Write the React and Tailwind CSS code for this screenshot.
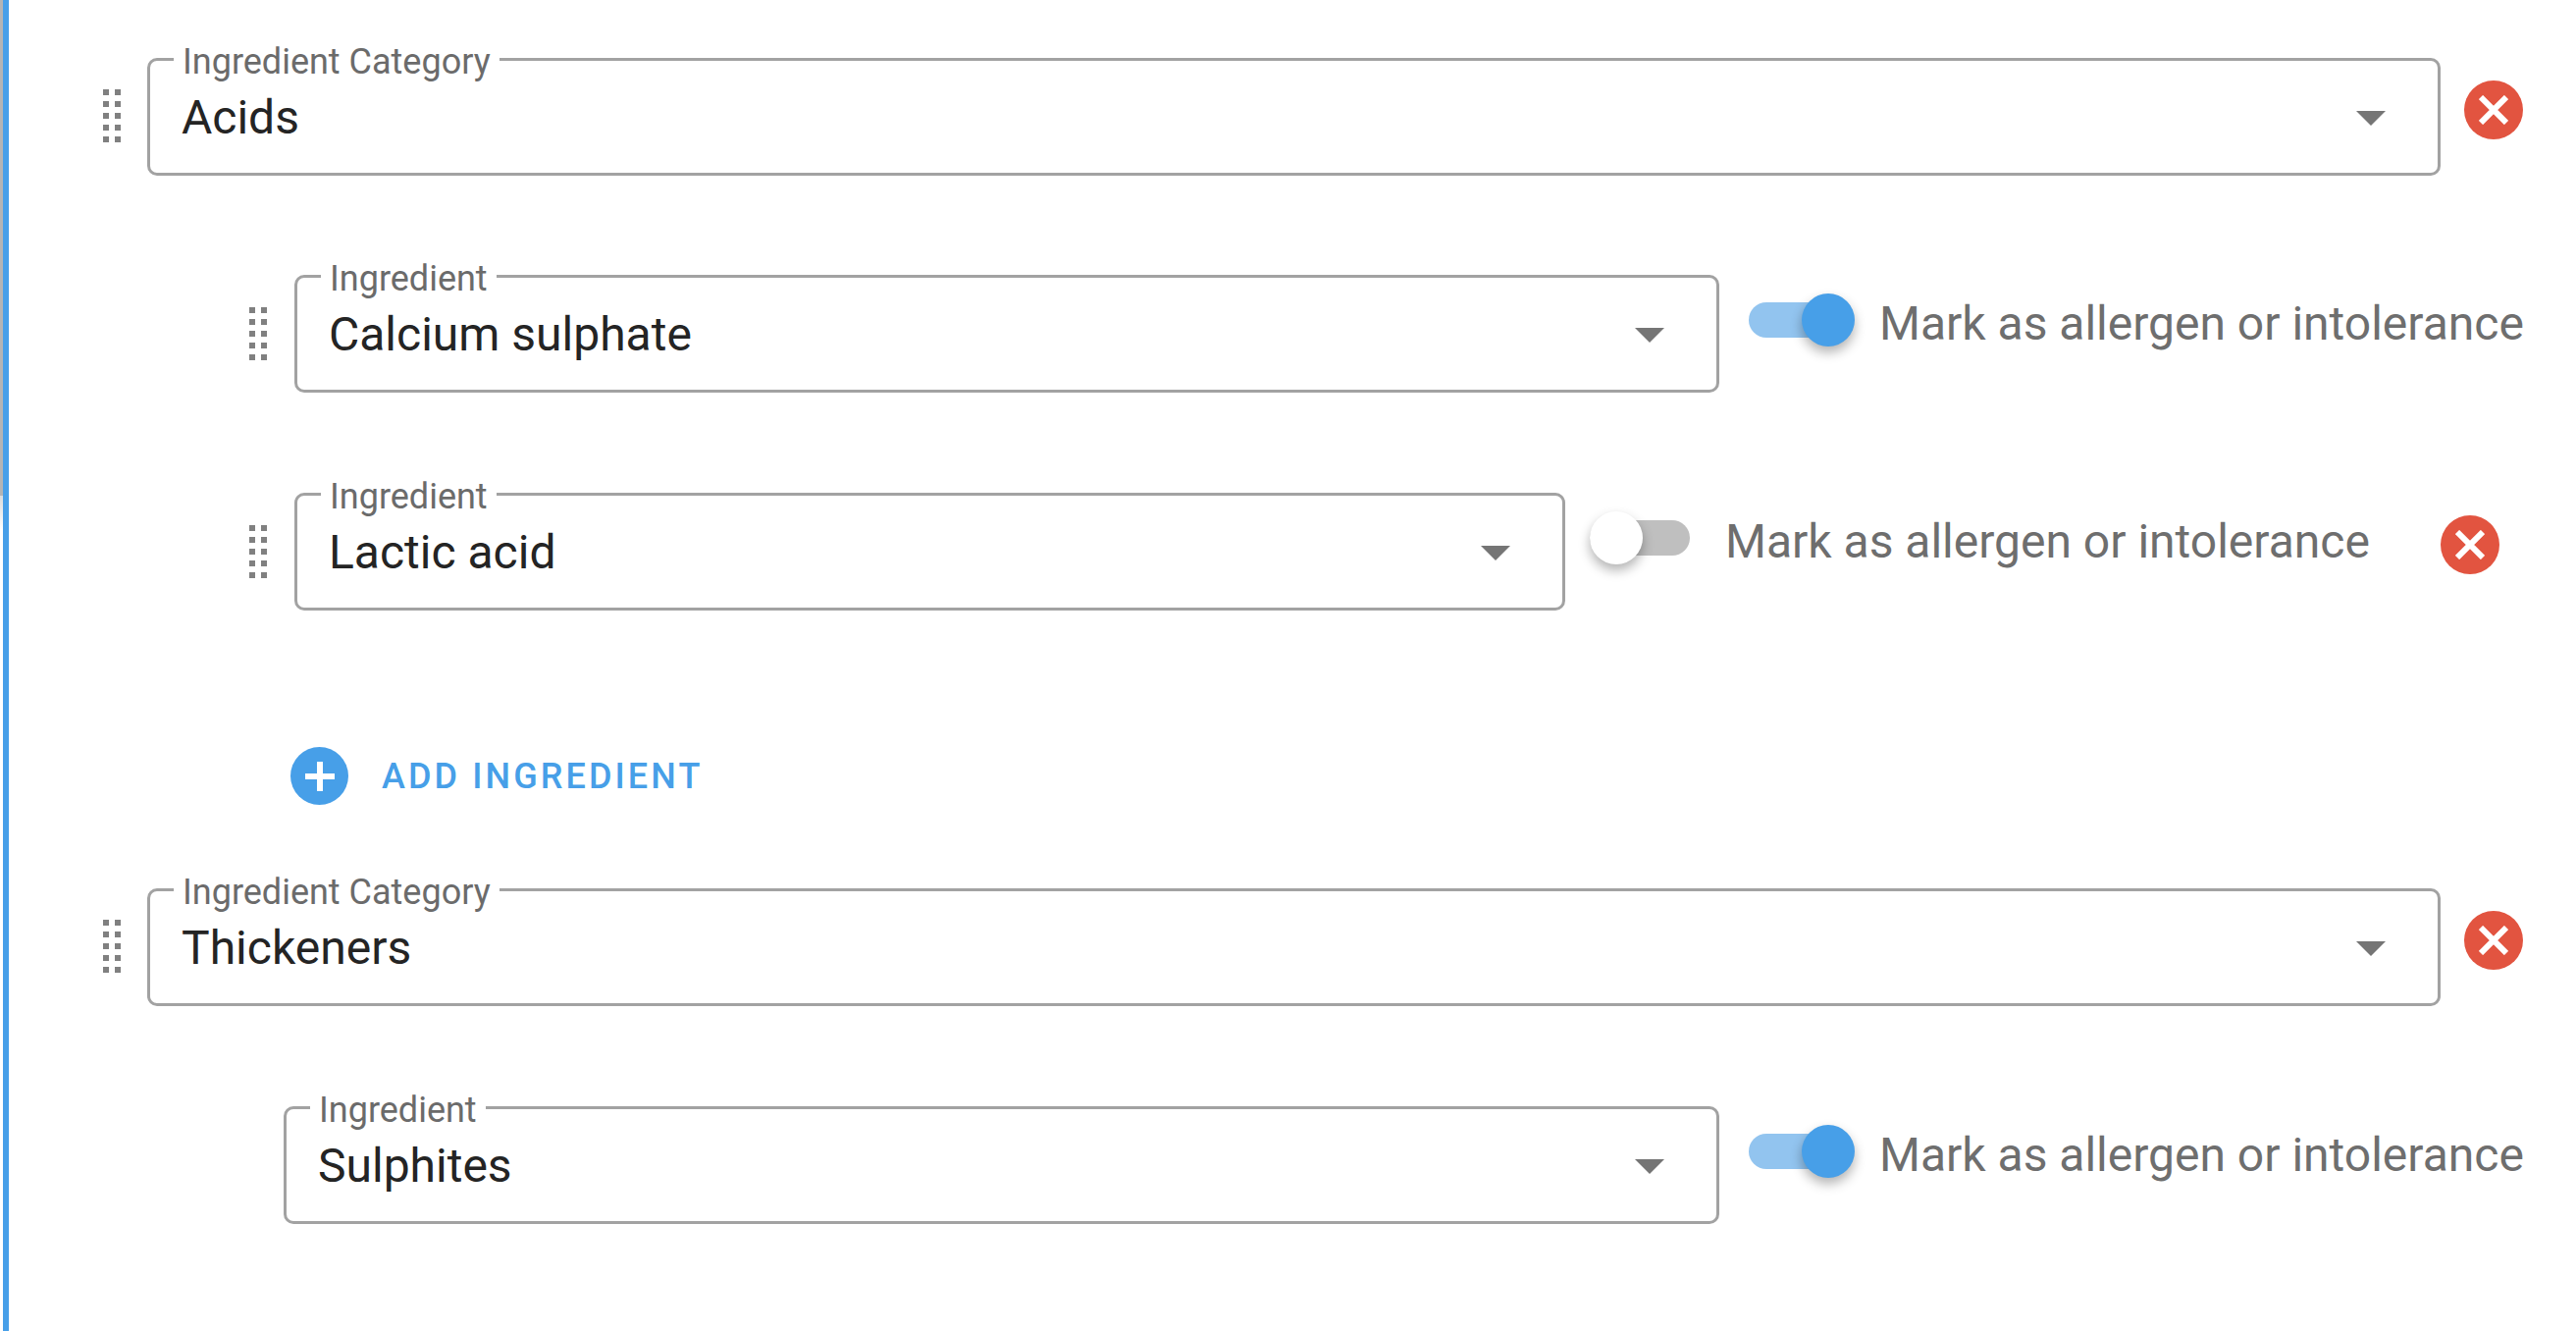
import React from 'react';

function DragHandle({ className }) {
  const rows = [0, 12, 24, 36, 48];
  return (
    <svg className={className} width="18" height="54" viewBox="0 0 18 54" fill="#808080">
      {rows.map((y) => (
        <g key={y}>
          <rect x="0" y={y} width="6" height="6" />
          <rect x="12" y={y} width="6" height="6" />
        </g>
      ))}
    </svg>
  );
}

function SelectField({ label, value, className }) {
  return (
    <fieldset className={`h-[143px] border-[3px] border-[#a2a2a2] rounded-[10px] pl-[32px] pr-[53px] flex items-center justify-between ${className}`}>
      <legend className="-ml-[8px] px-[9px] pt-[6px] text-[36px] leading-[42px] text-[#6b6b6b]">{label}</legend>
      <div className="flex items-center justify-between w-full -mt-[20px]">
        <span className="text-[48px] leading-[56px] text-[#242424]">{value}</span>
        <svg width="30" height="15" viewBox="0 0 30 15" fill="#757575">
          <path d="M0 0h30L15 15z" />
        </svg>
      </div>
    </fieldset>
  );
}

function DeleteButton({ className }) {
  return (
    <button className={`w-[60px] h-[60px] rounded-full bg-[#e25440] flex items-center justify-center shrink-0 ${className}`}>
      <svg width="30" height="30" viewBox="0 0 30 30" stroke="#ffffff" strokeWidth="6" strokeLinecap="butt">
        <path d="M2 2l26 26M28 2L2 28" />
      </svg>
    </button>
  );
}

function AllergenToggle({ checked, className }) {
  return (
    <div className={`flex items-start shrink-0 ${className}`}>
      <div className={`relative w-[102px] h-[36px] mt-[9px] rounded-full ${checked ? 'bg-[#92c4ef]' : 'bg-[#bfbfbf]'}`}>
        <span
          className={`absolute top-[-9px] w-[54px] h-[54px] rounded-full shadow-[0_6px_12px_rgba(0,0,0,0.3)] ${
            checked ? 'right-[-6px] bg-[#479fe8]' : 'left-0 bg-white'
          }`}
        />
      </div>
      <span className={`text-[48px] leading-[56px] mt-[3px] text-[#6e6e6e] ${checked ? 'ml-[31px]' : 'ml-[36px]'}`}>
        Mark as allergen or intolerance
      </span>
    </div>
  );
}

export default function App() {
  return (
    <div className="w-[2625px] h-[1356px] flex bg-white font-['Roboto',sans-serif] overflow-hidden">
      <div className="w-[3px] flex flex-col">
        <div className="h-[505px] bg-[#b4b4b4]" />
        <div className="h-[35px] bg-gradient-to-b from-[#dcdcdc] to-white" />
      </div>
      <div className="w-[6px] h-full bg-[#479fe8]" />

      <div className="flex-1 flex flex-col pt-[36px]">
        {/* Acids */}
        <div className="flex items-start">
          <DragHandle className="ml-[96px] mt-[55px]" />
          <SelectField label="Ingredient Category" value="Acids" className="ml-[27px] w-[2337px]" />
          <DeleteButton className="ml-[24px] mt-[46px]" />
        </div>

        <div className="flex items-start mt-[78px]">
          <DragHandle className="ml-[245px] mt-[56px]" />
          <SelectField label="Ingredient" value="Calcium sulphate" className="ml-[28px] w-[1452px]" />
          <AllergenToggle checked className="ml-[30px] mt-[42px]" />
        </div>

        <div className="flex items-start mt-[79px]">
          <DragHandle className="ml-[245px] mt-[56px]" />
          <SelectField label="Ingredient" value="Lactic acid" className="ml-[28px] w-[1295px]" />
          <AllergenToggle className="ml-[25px] mt-[42px]" />
          <DeleteButton className="ml-[72px] mt-[46px]" />
        </div>

        <button className="flex items-center ml-[287px] mt-[139px] w-fit">
          <span className="w-[59px] h-[59px] rounded-full bg-[#479fe8] flex items-center justify-center">
            <svg width="30" height="30" viewBox="0 0 30 30" fill="#ffffff">
              <path d="M12 0h6v12h12v6H18v12h-6V18H0v-6h12z" />
            </svg>
          </span>
          <span className="ml-[34px] text-[36px] leading-[42px] font-medium tracking-[3.1px] text-[#479fe8]">ADD INGREDIENT</span>
        </button>

        <div className="flex items-start mt-[62px]">
          <DragHandle className="ml-[96px] mt-[55px]" />
          <SelectField label="Ingredient Category" value="Thickeners" className="ml-[27px] w-[2337px]" />
          <DeleteButton className="ml-[24px] mt-[46px]" />
        </div>

        <div className="flex items-start mt-[79px]">
          <SelectField label="Ingredient" value="Sulphites" className="ml-[280px] w-[1463px]" />
          <AllergenToggle checked className="ml-[30px] mt-[42px]" />
        </div>
      </div>
    </div>
  );
}
